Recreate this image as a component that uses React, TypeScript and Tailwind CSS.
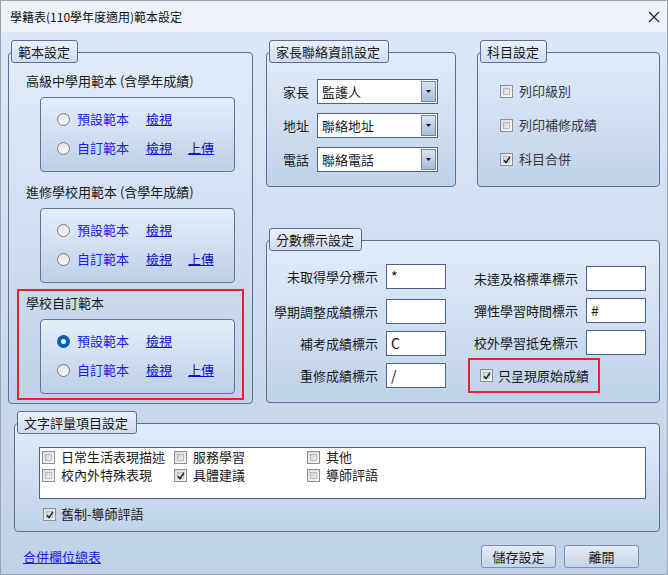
import React from "react";

const FONT = "font-['Noto_Sans_CJK_TC','Noto_Sans_CJK_SC',sans-serif]";

function CheckBox({ checked = false }: { checked?: boolean }) {
  return (
    <span className="relative flex h-[13px] w-[13px] shrink-0 items-center justify-center border border-[#8c8f94] bg-gradient-to-br from-[#dcdcdc] to-[#f9f9f9]">
      <span className="h-[7px] w-[7px] border border-[#b9bcc2] bg-gradient-to-br from-[#d2d4d8] to-[#f0f0f0]" />
      {checked && (
        <svg className="absolute left-[2px] top-[2px]" width="8" height="8" viewBox="0 0 8 8">
          <path d="M1 4.2 L3 6.6 L7 0.8" fill="none" stroke="#1e2430" strokeWidth="1.5" />
        </svg>
      )}
    </span>
  );
}

function Radio({ checked = false }: { checked?: boolean }) {
  if (checked) {
    return (
      <span className="flex h-[13px] w-[13px] shrink-0 items-center justify-center rounded-full bg-[#005fb8]">
        <span className="h-[5px] w-[5px] rounded-full bg-white" />
      </span>
    );
  }
  return (
    <span className="h-[13px] w-[13px] shrink-0 rounded-full border border-[#7c7c7c] bg-gradient-to-b from-[#e4e4e4] to-[#fafafa]" />
  );
}

function Legend({ text, w }: { text: string; w: string }) {
  return (
    <div
      className={`relative z-10 ml-[3px] flex h-[23px] items-center rounded-[3px] border border-[#5b6f94] bg-gradient-to-b from-[#eaf1fb] to-[#cfddef] pl-[6px] text-[13px] text-[#1a1a1a] ${w}`}
    >
      {text}
    </div>
  );
}

function RadioRow({ checked, label, upload }: { checked?: boolean; label: string; upload?: boolean }) {
  return (
    <div className="flex h-[20px] items-center pl-[16px]">
      <Radio checked={checked} />
      <span className="ml-[7px] w-[69px] text-[13px] text-[#1d1de6]">{label}</span>
      <span className="w-[42px] text-[13px] text-[#1212c8] underline">檢視</span>
      {upload && <span className="text-[13px] text-[#1212c8] underline">上傳</span>}
    </div>
  );
}

function TemplateSection({ title, red, defaultChecked }: { title: string; red?: boolean; defaultChecked?: boolean }) {
  return (
    <div className={`mx-[8px] h-[111px] border-2 ${red ? "border-[#e8222c]" : "border-transparent"} pt-[3px]`}>
      <div className="h-[18px] pl-[7px] text-[13px] leading-[18px] text-[#1a1a1a]">{title}</div>
      <div className="ml-[21px] mr-[7px] mt-[7px] flex h-[75px] flex-col gap-[9px] rounded-[4px] border border-[#5f7396] bg-gradient-to-b from-[#e4eefa] to-[#bdd0e8] pt-[11px]">
        <RadioRow checked={defaultChecked} label="預設範本" />
        <RadioRow label="自訂範本" upload />
      </div>
    </div>
  );
}

function Select({ value }: { value: string }) {
  return (
    <div className="flex h-[25px] w-[121px] items-center border border-[#4f6184] bg-white pl-[4px] pr-[1px]">
      <span className="flex-1 text-[13px] text-[#1a1a1a]">{value}</span>
      <span className="flex h-[21px] w-[15px] items-center justify-center border border-[#7185a8] bg-gradient-to-b from-[#dbe5f3] to-[#a7bcda]">
        <svg width="5" height="3" viewBox="0 0 5 3">
          <path d="M0 0 H5 L2.5 3 Z" fill="#111" />
        </svg>
      </span>
    </div>
  );
}

function FieldRow({ label, value, labelW }: { label: string; value: string; labelW: string }) {
  return (
    <div className="flex h-[25px] items-center">
      <span className={`${labelW} text-right text-[13px] text-[#1a1a1a]`}>{label}</span>
      <span className="ml-[8px] flex h-[25px] w-[60px] items-start border border-[#4f6184] bg-white pl-[4px] pt-[2px] text-[14px] leading-[18px] text-[#111]">
        {value}
      </span>
    </div>
  );
}

export default function App() {
  return (
    <div className={`flex h-[575px] w-[668px] flex-col overflow-hidden whitespace-nowrap border border-[#9aa3b1] ${FONT}`}>
      {/* title bar */}
      <div className="flex h-[31px] shrink-0 items-center justify-between bg-[#eef3f9] pl-[9px] pr-[7px]">
        <span className="text-[12px] text-[#111]">學籍表(110學年度適用)範本設定</span>
        <svg width="12" height="12" viewBox="0 0 12 12">
          <path d="M1 1 L11 11 M11 1 L1 11" stroke="#222" strokeWidth="1.1" />
        </svg>
      </div>

      {/* body */}
      <div className="flex flex-1 flex-col bg-gradient-to-b from-[#dce8f6] to-[#bfd1e8] pl-[7px] pr-[7px] pt-[8px]">
        <div className="flex items-start">
          {/* 範本設定 */}
          <div className="flex w-[245px] flex-col">
            <Legend text="範本設定" w="w-[67px]" />
            <div className="-mt-[11px] h-[352px] rounded-[4px] border border-[#5b6f94] bg-gradient-to-b from-[#e1ecf9] to-[#bfd2ea] pt-[14px]">
              <TemplateSection title="高級中學用範本 (含學年成績)" />
              <TemplateSection title="進修學校用範本 (含學年成績)" />
              <TemplateSection title="學校自訂範本" red defaultChecked />
            </div>
          </div>

          {/* right column */}
          <div className="ml-[13px] flex w-[394px] flex-col">
            <div className="flex items-start">
              {/* 家長聯絡資訊設定 */}
              <div className="flex w-[190px] flex-col">
                <Legend text="家長聯絡資訊設定" w="w-[120px]" />
                <div className="-mt-[11px] flex h-[135px] flex-col gap-[9px] rounded-[4px] border border-[#5b6f94] bg-gradient-to-b from-[#e1ecf9] to-[#bfd2ea] pl-[16px] pt-[26px]">
                  {[
                    ["家長", "監護人"],
                    ["地址", "聯絡地址"],
                    ["電話", "聯絡電話"],
                  ].map(([l, v]) => (
                    <div key={l} className="flex items-center">
                      <span className="w-[26px] shrink-0 text-[13px] text-[#1a1a1a]">{l}</span>
                      <span className="ml-[8px]">
                        <Select value={v} />
                      </span>
                    </div>
                  ))}
                </div>
              </div>

              {/* 科目設定 */}
              <div className="ml-[21px] flex w-[183px] flex-col">
                <Legend text="科目設定" w="w-[67px]" />
                <div className="-mt-[11px] flex h-[135px] flex-col gap-[14px] rounded-[4px] border border-[#5b6f94] bg-gradient-to-b from-[#e1ecf9] to-[#bfd2ea] pl-[22px] pt-[28px]">
                  {[
                    ["列印級別", false],
                    ["列印補修成績", false],
                    ["科目合併", true],
                  ].map(([l, c]) => (
                    <div key={l as string} className="flex h-[20px] items-center">
                      <CheckBox checked={c as boolean} />
                      <span className="ml-[6px] text-[13px] text-[#3a3a3a]">{l as string}</span>
                    </div>
                  ))}
                </div>
              </div>
            </div>

            {/* 分數標示設定 */}
            <div className="mt-[41px] flex flex-col">
              <Legend text="分數標示設定" w="w-[93px]" />
              <div className="-mt-[11px] flex h-[163px] rounded-[4px] border border-[#5b6f94] bg-gradient-to-b from-[#e1ecf9] to-[#bfd2ea]">
                <div className="flex flex-col pt-[23px]">
                  <FieldRow label="未取得學分標示" value="*" labelW="w-[111px]" />
                  <div className="mt-[10px]">
                    <FieldRow label="學期調整成績標示" value="" labelW="w-[111px]" />
                  </div>
                  <div className="mt-[7px]">
                    <FieldRow label="補考成績標示" value="C" labelW="w-[111px]" />
                  </div>
                  <div className="mt-[7px]">
                    <FieldRow label="重修成績標示" value="/" labelW="w-[111px]" />
                  </div>
                </div>
                <div className="ml-[22px] flex flex-col pt-[25px]">
                  <FieldRow label="未達及格標準標示" value="" labelW="w-[110px]" />
                  <div className="mt-[7px]">
                    <FieldRow label="彈性學習時間標示" value="#" labelW="w-[110px]" />
                  </div>
                  <div className="mt-[7px]">
                    <FieldRow label="校外學習抵免標示" value="" labelW="w-[110px]" />
                  </div>
                  <div className="mt-[3px] flex h-[35px] w-[132px] items-center border-2 border-[#e8222c] pl-[10px]">
                    <CheckBox checked />
                    <span className="ml-[5px] text-[13px] text-[#1a1a1a]">只呈現原始成績</span>
                  </div>
                </div>
              </div>
            </div>
          </div>
        </div>

        {/* 文字評量項目設定 */}
        <div className="ml-[6px] mt-[7px] flex w-[646px] flex-col">
          <Legend text="文字評量項目設定" w="w-[120px]" />
          <div className="-mt-[11px] flex h-[109px] flex-col rounded-[4px] border border-[#5b6f94] bg-gradient-to-b from-[#e1ecf9] to-[#bfd2ea] pt-[23px]">
            <div className="ml-[24px] grid h-[52px] w-[607px] grid-cols-[132px_133px_132px] content-start border border-[#4f6184] bg-white pl-[2px]">
              {[
                ["日常生活表現描述", false],
                ["服務學習", false],
                ["其他", false],
                ["校內外特殊表現", false],
                ["具體建議", true],
                ["導師評語", false],
              ].map(([l, c]) => (
                <div key={l as string} className="flex h-[18px] items-center">
                  <CheckBox checked={c as boolean} />
                  <span className="ml-[6px] text-[13px] text-[#1a1a1a]">{l as string}</span>
                </div>
              ))}
            </div>
            <div className="ml-[28px] mt-[6px] flex h-[18px] items-center">
              <CheckBox checked />
              <span className="ml-[5px] text-[13px] text-[#1a1a1a]">舊制-導師評語</span>
            </div>
          </div>
        </div>

        {/* footer */}
        <div className="mt-[13px] flex items-center justify-between pl-[15px] pr-[21px]">
          <span className="text-[13px] text-[#1d1de6] underline">合併欄位總表</span>
          <div className="flex gap-[8px]">
            <button className="flex h-[23px] w-[75px] items-center justify-center rounded-[3px] border border-[#7d8fb0] bg-gradient-to-b from-[#e3ebf6] to-[#c4d4ea] text-[13px] text-[#1a1a1a]">
              儲存設定
            </button>
            <button className="flex h-[23px] w-[75px] items-center justify-center rounded-[3px] border border-[#7d8fb0] bg-gradient-to-b from-[#e3ebf6] to-[#c4d4ea] text-[13px] text-[#1a1a1a]">
              離開
            </button>
          </div>
        </div>
      </div>
    </div>
  );
}
